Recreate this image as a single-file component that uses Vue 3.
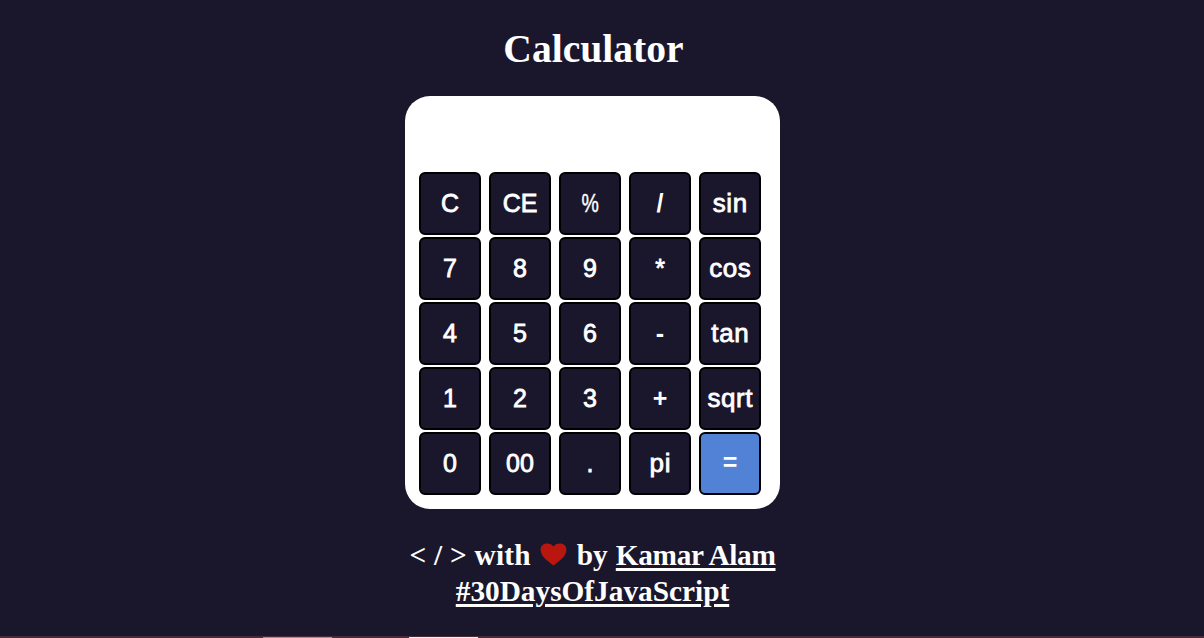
<script setup>
const keys = [
  'C', 'CE', '%', '/', 'sin',
  '7', '8', '9', '*', 'cos',
  '4', '5', '6', '-', 'tan',
  '1', '2', '3', '+', 'sqrt',
  '0', '00', '.', 'pi', '=',
]

function keyClass(key) {
  return {
    equals: key === '=',
    word: /^[a-z]+$/.test(key),
    percent: key === '%',
    symbol: ['-', '+', '/', '='].includes(key),
  }
}
</script>

<template>
  <div class="page">
    <main class="content">
      <h1 class="title">Calculator</h1>
      <section class="calculator">
        <div class="display"></div>
        <div class="keys">
          <button v-for="key in keys" :key="key" class="key" :class="keyClass(key)"><span>{{ key }}</span></button>
        </div>
      </section>
      <footer class="credits">
        <div class="line">
          <span class="made">&lt; / &gt; with</span>
          <svg class="heart" viewBox="0 0 27 23" width="27" height="23">
            <path d="M13.5 22.6C9.5 19 1 14.500 .6 7.200C.3 2.800 3.400 .5 7 .5C9.900 .5 12.300 1.600 13.500 3.700C14.700 1.600 17.100 .5 20 .5C23.600 .5 26.700 2.800 26.400 7.200C26 14.500 17.500 19 13.500 22.600Z" fill="#b9160f" />
          </svg>
          <span class="by">by</span>
          <a class="author">Kamar Alam</a>
        </div>
        <div class="line"><a class="tag">#30DaysOfJavaScript</a></div>
      </footer>
    </main>
    <div class="strip"><i class="tab dim"></i><i class="tab"></i></div>
  </div>
</template>

<style>
body {
  margin: 0;
  background: #1a172c;
}
</style>

<style scoped>
.page {
  display: flex;
  flex-direction: column;
  width: 100%;
  height: 638px;
  overflow: hidden;
  background: #1a172c;
  color: #fff;
  font-family: "Liberation Serif", "Times New Roman", serif;
}
.content {
  flex: 1;
  display: flex;
  flex-direction: column;
  align-items: center;
  width: 1185px;
}
.title {
  margin: 26px 0 24px 2px;
  font-size: 39.6px;
  line-height: 46px;
  font-weight: 700;
}
.calculator {
  box-sizing: border-box;
  width: 375px;
  height: 413px;
  padding: 0 14px;
  border-radius: 25px;
  background: #fff;
}
.display {
  height: 76px;
}
.keys {
  display: grid;
  grid-template-columns: repeat(5, 62px);
  grid-auto-rows: 63px;
  gap: 2px 8px;
}
.key {
  display: flex;
  align-items: center;
  justify-content: center;
  box-sizing: border-box;
  margin: 0;
  padding: 0 0 2px;
  border: 2px solid #000;
  border-radius: 6px;
  background: #1a172c;
  color: #fff;
  font: 400 25px/28px "Liberation Sans", Arial, sans-serif;
  -webkit-text-stroke: 0.8px #fff;
}
.word {
  font-size: 26px;
  letter-spacing: 0.6px;
}
.word span {
  margin-right: -0.6px;
}
.symbol {
  font-weight: 700;
  -webkit-text-stroke: 0;
}
.percent {
  -webkit-text-stroke: 0.4px #fff;
}
.percent span {
  transform: scaleX(0.78);
}
.equals {
  background: #5282d6;
  padding-bottom: 4px;
}
.credits {
  margin-top: 28px;
  font-size: 29.3px;
  font-weight: 700;
  line-height: 36px;
}
.line {
  display: flex;
  justify-content: center;
  height: 36px;
}
.made {
  letter-spacing: 0.25px;
}
.heart {
  margin: 6px 10px 0 9px;
}
.by {
  margin-right: 8px;
}
.author {
  letter-spacing: -0.33px;
}
.author,
.tag {
  text-decoration: underline;
  text-decoration-thickness: 3px;
  text-underline-offset: 3px;
}
.strip {
  display: flex;
  align-items: flex-end;
  gap: 77px;
  height: 2px;
  padding-left: 263px;
  background: #4b2935;
}
.tab {
  width: 69px;
  height: 1px;
  background: #fbeaf3;
}
.dim {
  background: #a38c94;
}
</style>
